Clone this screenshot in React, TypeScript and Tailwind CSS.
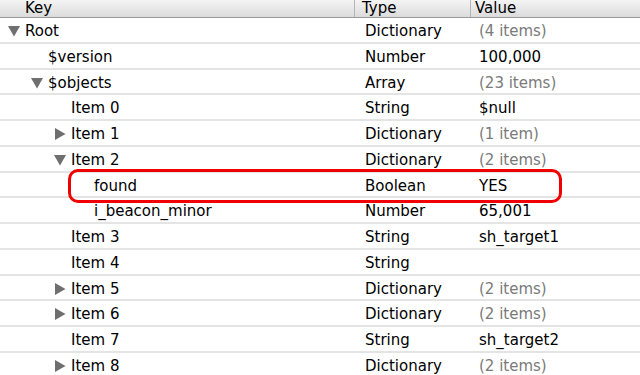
import React from 'react'

type Row = {
    key: string
    level: number
    arrow?: 'open' | 'closed'
    type: string
    value: string
    muted?: boolean
    marked?: boolean
}

const rows: Row[] = [
    { key: 'Root', level: 0, arrow: 'open', type: 'Dictionary', value: '(4 items)', muted: true },
    { key: '$version', level: 1, type: 'Number', value: '100,000' },
    { key: '$objects', level: 1, arrow: 'open', type: 'Array', value: '(23 items)', muted: true },
    { key: 'Item 0', level: 2, type: 'String', value: '$null' },
    { key: 'Item 1', level: 2, arrow: 'closed', type: 'Dictionary', value: '(1 item)', muted: true },
    { key: 'Item 2', level: 2, arrow: 'open', type: 'Dictionary', value: '(2 items)', muted: true },
    { key: 'found', level: 3, type: 'Boolean', value: 'YES', marked: true },
    { key: 'i_beacon_minor', level: 3, type: 'Number', value: '65,001' },
    { key: 'Item 3', level: 2, type: 'String', value: 'sh_target1' },
    { key: 'Item 4', level: 2, type: 'String', value: '' },
    { key: 'Item 5', level: 2, arrow: 'closed', type: 'Dictionary', value: '(2 items)', muted: true },
    { key: 'Item 6', level: 2, arrow: 'closed', type: 'Dictionary', value: '(2 items)', muted: true },
    { key: 'Item 7', level: 2, type: 'String', value: 'sh_target2' },
    { key: 'Item 8', level: 2, arrow: 'closed', type: 'Dictionary', value: '(2 items)', muted: true },
]

const pad = ['pl-[25px]', 'pl-[48px]', 'pl-[71px]', 'pl-[94px]']

function Arrow({ dir }: { dir: 'open' | 'closed' }) {
    return (
        <svg className="absolute left-[-17px] top-1/2 -translate-y-1/2" width="12" height="12" viewBox="0 0 12 12">
            {dir === 'open' ? (
                <polygon points="0,1 12,1 6,11.5" fill="#6f6f6f" />
            ) : (
                <polygon points="1,0 11.5,6 1,12" fill="#6f6f6f" />
            )}
        </svg>
    )
}

export default function App() {
    return (
        <div
            className="w-[640px] h-[375px] overflow-hidden bg-white text-[15px] text-black"
            style={{ fontFamily: '"DejaVu Sans", "Noto Sans", sans-serif' }}
        >
            <div className="flex h-[18px] items-center border-b border-[#9a9a9a] bg-gradient-to-b from-[#f4f4f4] to-[#dcdcdc] leading-none">
                <div className="w-[355px] pl-[25px] border-r border-[#b5b5b5] h-full flex items-center">Key</div>
                <div className="w-[116px] pl-[7px] border-r border-[#b5b5b5] h-full flex items-center">Type</div>
                <div className="flex-1 pl-[4px] h-full flex items-center">Value</div>
            </div>
            {rows.map((r, i) => (
                <div key={i} className="relative flex h-[25.75px] items-center pt-[3px] border-b-2 border-[#e4e4e4]">
                    <div className={`w-[365px] ${pad[r.level]}`}>
                        <span className="relative">
                            {r.arrow && <Arrow dir={r.arrow} />}
                            {r.key}
                        </span>
                    </div>
                    <div className="w-[114px]">{r.type}</div>
                    <div className={r.muted ? 'text-[#7a7a7a]' : ''}>{r.value}</div>
                    {r.marked && (
                        <div className="absolute left-[68px] top-[-4px] w-[494px] h-[34px] rounded-[10px] border-[3px] border-[#f00000]" />
                    )}
                </div>
            ))}
        </div>
    )
}
